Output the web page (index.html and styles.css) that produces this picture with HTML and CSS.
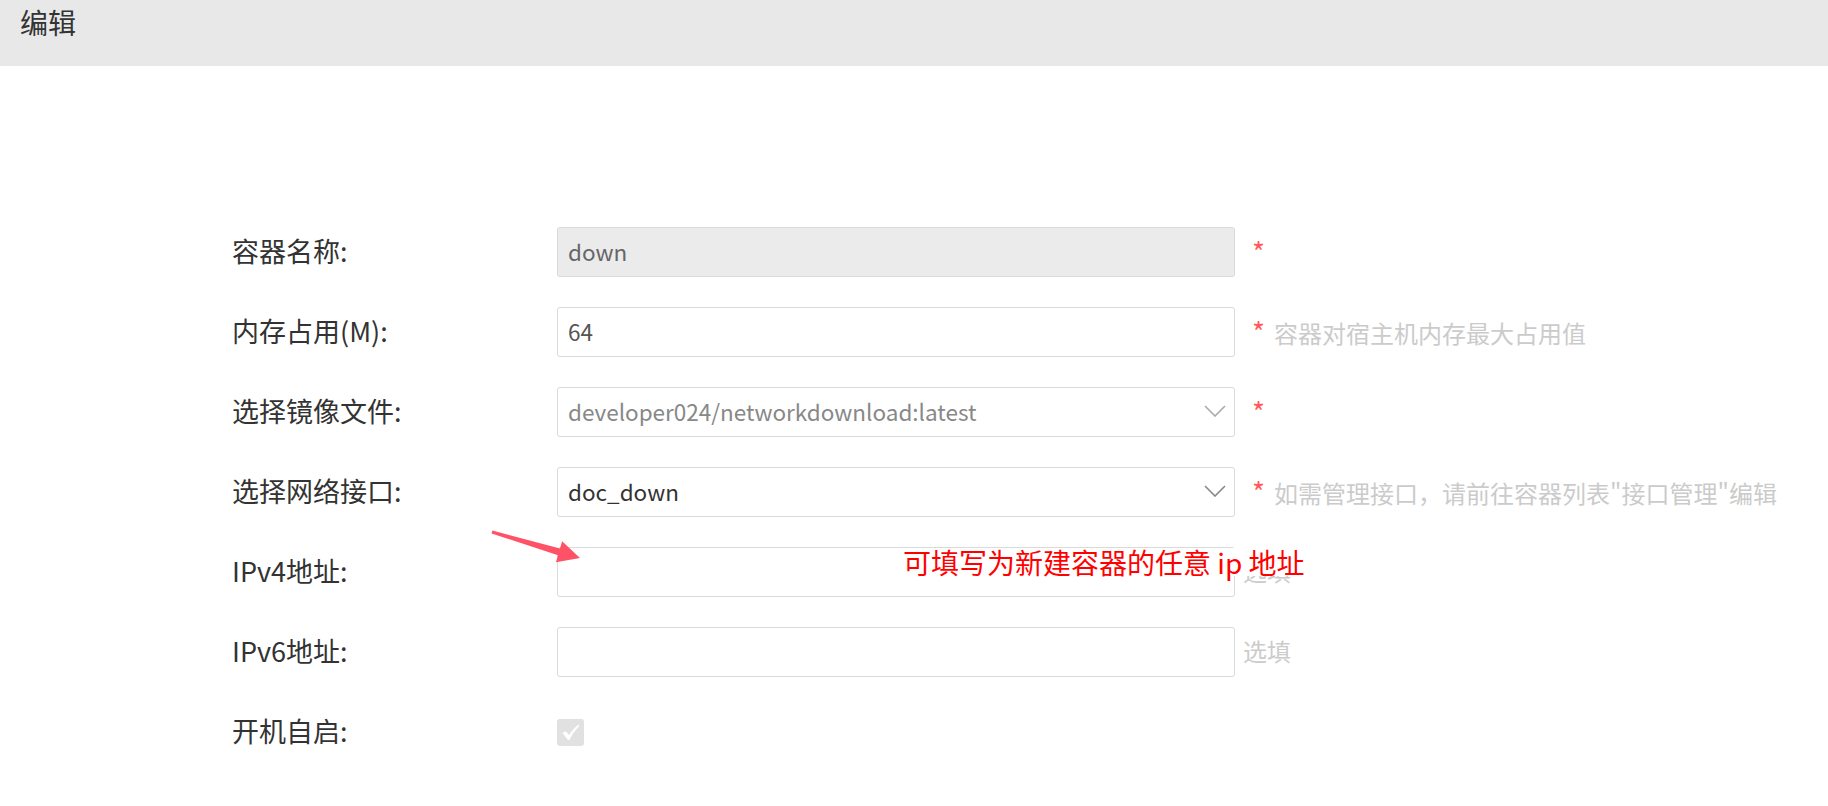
FILE: index.html
```html
<!DOCTYPE html>
<html lang="zh-CN">
<head>
    <meta charset="UTF-8">
    <title>编辑</title>
    <link rel="stylesheet" href="styles.css">
</head>
<body>
<div class="header">编辑</div>

<div class="form">
    <div class="row">
        <span class="label">容器名称:</span>
        <div class="field disabled">down</div>
        <span class="tip"><i class="req">*</i></span>
    </div>
    <div class="row">
        <span class="label">内存占用(M):</span>
        <div class="field">64</div>
        <span class="tip"><i class="req">*</i>容器对宿主机内存最大占用值</span>
    </div>
    <div class="row">
        <span class="label">选择镜像文件:</span>
        <div class="field select muted">
            <span>developer024/networkdownload:latest</span>
            <svg class="arrow" width="22" height="12" viewBox="0 0 22 12"><polyline points="1,1 11,11 21,1"/></svg>
        </div>
        <span class="tip"><i class="req">*</i></span>
    </div>
    <div class="row">
        <span class="label">选择网络接口:</span>
        <div class="field select">
            <span>doc_down</span>
            <svg class="arrow dark" width="22" height="12" viewBox="0 0 22 12"><polyline points="1,1 11,11 21,1"/></svg>
        </div>
        <span class="tip"><i class="req">*</i>如需管理接口，请前往容器列表"接口管理"编辑</span>
    </div>
    <div class="row">
        <span class="label">IPv4地址:</span>
        <div class="field"></div>
        <span class="tip">选填</span>
    </div>
    <div class="row">
        <span class="label">IPv6地址:</span>
        <div class="field"></div>
        <span class="tip">选填</span>
    </div>
    <div class="row">
        <span class="label">开机自启:</span>
        <span class="check">
            <svg width="27" height="27" viewBox="0 0 27 27"><path d="M5.5 14 Q7.5 12 9 12.5 L12 16 Q15.5 10 21.5 5.5 Q22.5 6.5 22 7.5 Q16 13 12.5 21 L11 21 Z"/></svg>
        </span>
    </div>
</div>

<!-- 截图上的标注 -->
<svg class="mark" width="1828" height="806" viewBox="0 0 1828 806">
    <polygon points="492.4,530.6 560,548.4 562.1,541.3 580,558 555.9,562.3 558,555.2 491.6,533.4"/>
</svg>
<div class="note">可填写为新建容器的任意 ip 地址</div>
</body>
</html>
```

FILE: styles.css
```css
* {
    margin: 0;
    padding: 0;
    box-sizing: border-box;
}

body {
    font-family: "Noto Sans CJK SC", sans-serif;
    font-size: 24px;
    color: #333;
    background: #fff;
}

.header {
    height: 66px;
    padding: 2px 20px;
    font-size: 28px;
    background-color: #e8e8e8;
    color: #333;
}

.form {
    display: flex;
    flex-direction: column;
    gap: 30px;
    padding: 161px 0 0 232px;
}

.row {
    display: flex;
    align-items: center;
    height: 50px;
}

.label {
    width: 325px;
    flex: none;
    padding-bottom: 4px;
    font-size: 27px;
    color: #333;
}

.field {
    width: 678px;
    height: 50px;
    flex: none;
    display: flex;
    align-items: center;
    padding: 0 10px 2px;
    border: 1px solid #dadada;
    border-radius: 3px;
    font-size: 22.5px;
    color: #555;
    background-color: #fff;
}

.field.disabled {
    background-color: #ebebeb;
    color: #666;
}

.select {
    justify-content: space-between;
    padding-right: 8px;
    color: #333;
}

.select.muted {
    color: #888;
}

.arrow polyline {
    fill: none;
    stroke: #aaa;
    stroke-width: 1.6;
}

.arrow.dark polyline {
    stroke: #888;
}

.tip {
    margin-left: 8px;
    padding-bottom: 3px;
    color: #cbcbcb;
    white-space: nowrap;
}

.req {
    font-style: normal;
    font-size: 28px;
    color: #ff5a5a;
    margin: 0 9px 0 9px;
}

.check {
    width: 27px;
    height: 27px;
    border-radius: 3px;
    background-color: #e1e1e1;
}

.check svg {
    display: block;
}

.check path {
    fill: #fff;
}

.mark {
    position: absolute;
    left: 0;
    top: 0;
    pointer-events: none;
}

.mark polygon {
    fill: #ff5266;
}

.note {
    position: absolute;
    left: 901px;
    top: 548px;
    font-size: 28px;
    line-height: 28px;
    padding: 0 2px;
    color: #f00;
    background-color: #fff;
}
```
